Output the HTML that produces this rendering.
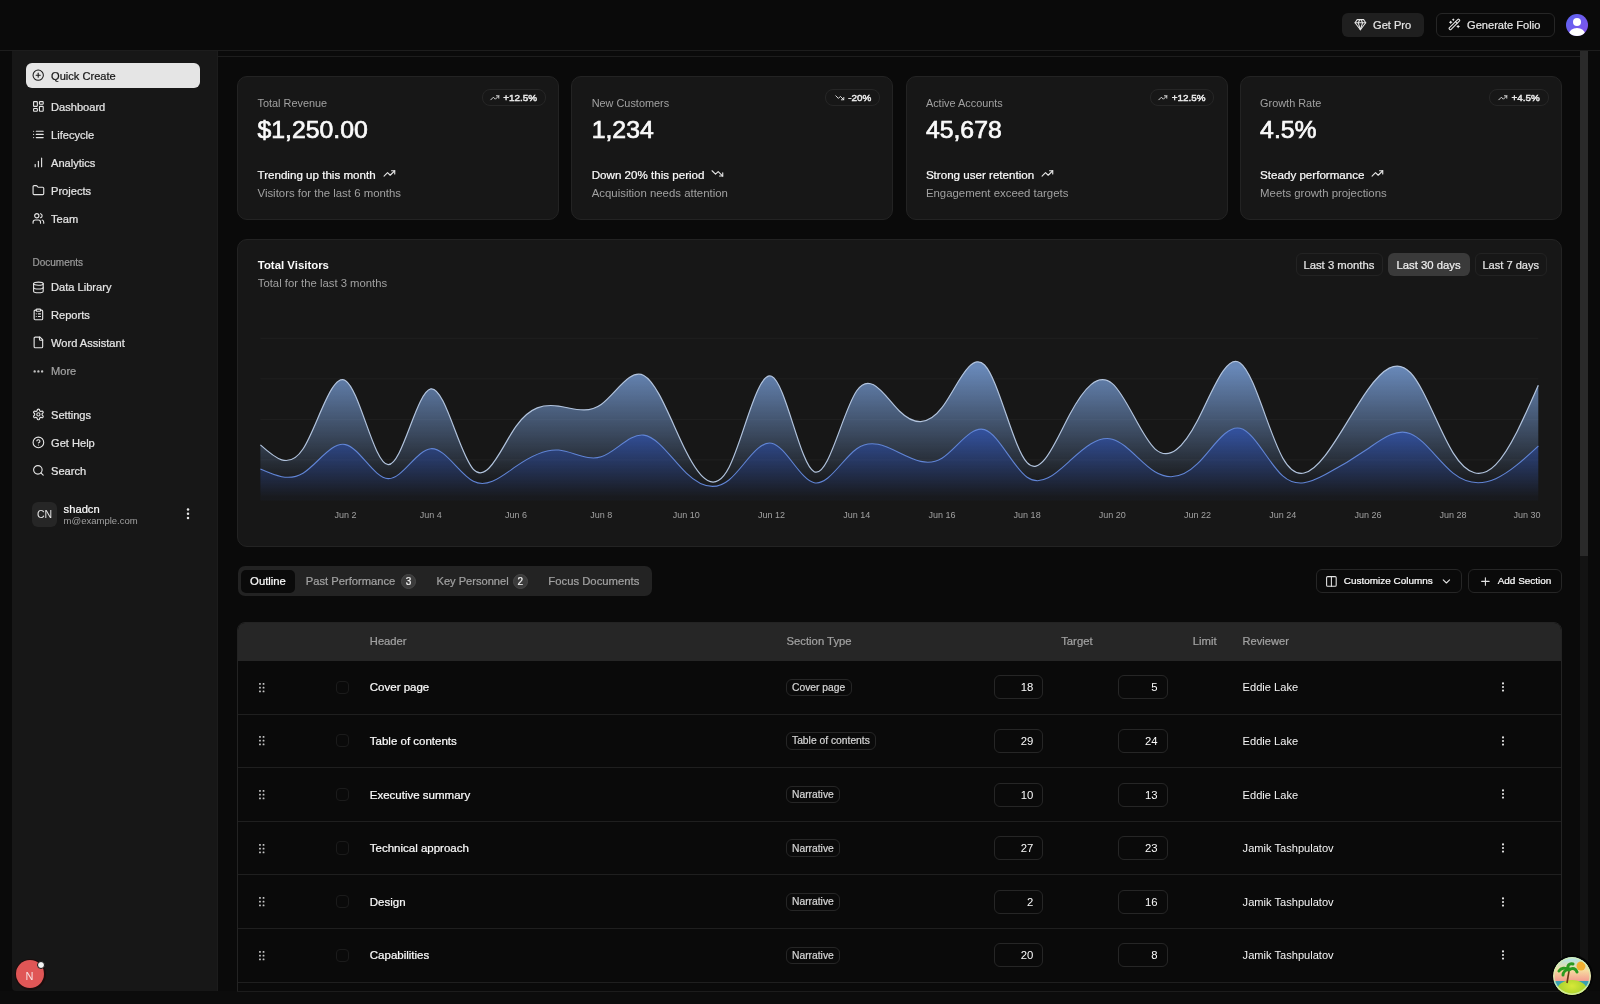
<!DOCTYPE html>
<html><head><meta charset="utf-8"><style>
html,body{margin:0;padding:0;width:1600px;height:1004px;overflow:hidden;background:#0a0a0a}
body{position:relative;font-family:"Liberation Sans",sans-serif;}
.t{position:absolute;white-space:nowrap;line-height:1;}
.m{-webkit-text-stroke:0.22px currentColor}
.r{position:absolute;box-sizing:border-box;}
svg.r{overflow:visible}
</style></head><body>
<div id="root" style="position:absolute;left:0;top:0;width:1600px;height:1004px;will-change:transform">
<div class="r" style="left:0.00px;top:0.00px;width:1600.00px;height:1004.00px;background:#0a0a0a"></div>
<div class="r" style="left:0.00px;top:50.00px;width:1600.00px;height:1.00px;background:#1d1d1d"></div>
<div class="r" style="left:12.00px;top:51.00px;width:206.00px;height:940.00px;background:#171717;border-bottom-left-radius:4px"></div>
<div class="r" style="left:217.00px;top:51.00px;width:1.00px;height:940.00px;background:#1c1c1c"></div>
<div class="r" style="left:218.00px;top:51.00px;width:1362.00px;height:940.00px;background:#0a0a0a"></div>
<div class="r" style="left:218.00px;top:56.00px;width:1362.00px;height:1.00px;background:#1d1d1d"></div>
<div class="r" style="left:1580.00px;top:51.00px;width:8.00px;height:940.00px;background:#131313"></div>
<div class="r" style="left:1580.00px;top:51.00px;width:8.00px;height:505.00px;background:#2a2a2a;border-radius:0"></div>
<div class="r" style="left:0.00px;top:991.00px;width:1600.00px;height:13.00px;background:#0c0c0c"></div>
<div class="r" style="left:1342.00px;top:12.50px;width:82.00px;height:24.50px;background:#1f1f1f;border-radius:6px"></div>
<svg class="r" style="left:1353.50px;top:18.20px;" width="12.8" height="12.8" viewBox="0 0 24 24" fill="none"><g stroke="#e5e5e5" stroke-width="2" stroke-linecap="round" stroke-linejoin="round"><path d="M6 3h12l4 6-10 13L2 9Z"/><path d="M11 3 8 9l4 13 4-13-3-6"/><path d="M2 9h20"/></g></svg>
<div class="t m" style="left:1373.00px;top:20.00px;font-size:11.1px;color:#e5e5e5;font-weight:400;">Get Pro</div>
<div class="r" style="left:1435.50px;top:12.50px;width:119.50px;height:24.50px;border:1px solid #262626;border-radius:6px;background:#0a0a0a"></div>
<svg class="r" style="left:1448.30px;top:18.20px;" width="12.8" height="12.8" viewBox="0 0 24 24" fill="none"><g stroke="#e5e5e5" stroke-width="2" stroke-linecap="round" stroke-linejoin="round"><path d="m21.64 3.64-1.28-1.28a1.21 1.21 0 0 0-1.72 0L2.36 18.64a1.21 1.21 0 0 0 0 1.72l1.28 1.28a1.2 1.2 0 0 0 1.72 0L21.64 5.36a1.2 1.2 0 0 0 0-1.72"/><path d="m14 7 3 3"/><path d="M5 6v4"/><path d="M19 14v4"/><path d="M10 2v2"/><path d="M7 8H3"/><path d="M21 16h-4"/><path d="M11 3H9"/></g></svg>
<div class="t m" style="left:1467.00px;top:20.00px;font-size:11.1px;color:#e5e5e5;font-weight:400;">Generate Folio</div>
<div class="r" style="left:1565.7px;top:14px;width:22px;height:22px;border-radius:50%;background:linear-gradient(135deg,#5a66f2,#8550ea);overflow:hidden"><div style="position:absolute;left:7px;top:4px;width:8px;height:8px;border-radius:50%;background:#fff"></div><div style="position:absolute;left:3px;top:14px;width:16px;height:12px;border-radius:50%;background:#fff"></div></div>
<div class="r" style="left:26.00px;top:63.00px;width:174.00px;height:25.00px;background:#e5e5e5;border-radius:6px"></div>
<svg class="r" style="left:31.90px;top:69.30px;" width="12.4" height="12.4" viewBox="0 0 24 24" fill="none"><g stroke="#171717" stroke-width="2" stroke-linecap="round" stroke-linejoin="round"><circle cx="12" cy="12" r="10"/><path d="M8 12h8"/><path d="M12 8v8"/></g></svg>
<div class="t m" style="left:51.00px;top:71.00px;font-size:11.1px;color:#171717;font-weight:400;">Quick Create</div>
<svg class="r" style="left:32.00px;top:100.10px;" width="12.8" height="12.8" viewBox="0 0 24 24" fill="none"><g stroke="#e5e5e5" stroke-width="2.1" stroke-linecap="round" stroke-linejoin="round"><rect width="7" height="9" x="3" y="3" rx="1"/><rect width="7" height="5" x="14" y="3" rx="1"/><rect width="7" height="9" x="14" y="12" rx="1"/><rect width="7" height="5" x="3" y="16" rx="1"/></g></svg>
<div class="t m" style="left:51.00px;top:102.00px;font-size:11.1px;color:#e5e5e5;font-weight:400;">Dashboard</div>
<svg class="r" style="left:32.00px;top:128.30px;" width="12.8" height="12.8" viewBox="0 0 24 24" fill="none"><g stroke="#e5e5e5" stroke-width="2.1" stroke-linecap="round" stroke-linejoin="round"><path d="M8 6h13"/><path d="M8 12h13"/><path d="M8 18h13"/><path d="M3 6h.01"/><path d="M3 12h.01"/><path d="M3 18h.01"/></g></svg>
<div class="t m" style="left:51.00px;top:130.00px;font-size:11.1px;color:#e5e5e5;font-weight:400;">Lifecycle</div>
<svg class="r" style="left:32.00px;top:156.40px;" width="12.8" height="12.8" viewBox="0 0 24 24" fill="none"><g stroke="#e5e5e5" stroke-width="2.1" stroke-linecap="round" stroke-linejoin="round"><path d="M12 20V10"/><path d="M18 20V4"/><path d="M6 20v-4"/></g></svg>
<div class="t m" style="left:51.00px;top:158.00px;font-size:11.1px;color:#e5e5e5;font-weight:400;">Analytics</div>
<svg class="r" style="left:32.00px;top:184.30px;" width="12.8" height="12.8" viewBox="0 0 24 24" fill="none"><g stroke="#e5e5e5" stroke-width="2.1" stroke-linecap="round" stroke-linejoin="round"><path d="M20 20a2 2 0 0 0 2-2V8a2 2 0 0 0-2-2h-7.9a2 2 0 0 1-1.69-.9L9.6 3.9A2 2 0 0 0 7.930 3H4a2 2 0 0 0-2 2v13a2 2 0 0 0 2 2Z"/></g></svg>
<div class="t m" style="left:51.00px;top:186.00px;font-size:11.1px;color:#e5e5e5;font-weight:400;">Projects</div>
<svg class="r" style="left:32.00px;top:212.20px;" width="12.8" height="12.8" viewBox="0 0 24 24" fill="none"><g stroke="#e5e5e5" stroke-width="2.1" stroke-linecap="round" stroke-linejoin="round"><path d="M16 21v-2a4 4 0 0 0-4-4H6a4 4 0 0 0-4 4v2"/><circle cx="9" cy="7" r="4"/><path d="M22 21v-2a4 4 0 0 0-3-3.87"/><path d="M16 3.13a4 4 0 0 1 0 7.75"/></g></svg>
<div class="t m" style="left:51.00px;top:214.00px;font-size:11.1px;color:#e5e5e5;font-weight:400;">Team</div>
<svg class="r" style="left:32.00px;top:280.50px;" width="12.8" height="12.8" viewBox="0 0 24 24" fill="none"><g stroke="#e5e5e5" stroke-width="2.1" stroke-linecap="round" stroke-linejoin="round"><ellipse cx="12" cy="5" rx="9" ry="3"/><path d="M3 5V19A9 3 0 0 0 21 19V5"/><path d="M3 12A9 3 0 0 0 21 12"/></g></svg>
<div class="t m" style="left:51.00px;top:282.00px;font-size:11.1px;color:#e5e5e5;font-weight:400;">Data Library</div>
<svg class="r" style="left:32.00px;top:308.40px;" width="12.8" height="12.8" viewBox="0 0 24 24" fill="none"><g stroke="#e5e5e5" stroke-width="2.1" stroke-linecap="round" stroke-linejoin="round"><rect width="8" height="4" x="8" y="2" rx="1" ry="1"/><path d="M16 4h2a2 2 0 0 1 2 2v14a2 2 0 0 1-2 2H6a2 2 0 0 1-2-2V6a2 2 0 0 1 2-2h2"/><path d="M12 11h4"/><path d="M12 16h4"/><path d="M8 11h.01"/><path d="M8 16h.01"/></g></svg>
<div class="t m" style="left:51.00px;top:310.00px;font-size:11.1px;color:#e5e5e5;font-weight:400;">Reports</div>
<svg class="r" style="left:32.00px;top:336.40px;" width="12.8" height="12.8" viewBox="0 0 24 24" fill="none"><g stroke="#e5e5e5" stroke-width="2.1" stroke-linecap="round" stroke-linejoin="round"><path d="M15 2H6a2 2 0 0 0-2 2v16a2 2 0 0 0 2 2h12a2 2 0 0 0 2-2V7Z"/><path d="M14 2v4a2 2 0 0 0 2 2h4"/></g></svg>
<div class="t m" style="left:51.00px;top:338.00px;font-size:11.1px;color:#e5e5e5;font-weight:400;">Word Assistant</div>
<svg class="r" style="left:32.00px;top:408.20px;" width="12.8" height="12.8" viewBox="0 0 24 24" fill="none"><g stroke="#e5e5e5" stroke-width="2.1" stroke-linecap="round" stroke-linejoin="round"><path d="M12.22 2h-.44a2 2 0 0 0-2 2v.18a2 2 0 0 1-1 1.73l-.43.25a2 2 0 0 1-2 0l-.15-.08a2 2 0 0 0-2.730.73l-.22.38a2 2 0 0 0 .73 2.730l.15.1a2 2 0 0 1 1 1.72v.51a2 2 0 0 1-1 1.74l-.15.09a2 2 0 0 0-.73 2.730l.22.38a2 2 0 0 0 2.730.73l.15-.08a2 2 0 0 1 2 0l.43.25a2 2 0 0 1 1 1.73V20a2 2 0 0 0 2 2h.44a2 2 0 0 0 2-2v-.18a2 2 0 0 1 1-1.73l.43-.25a2 2 0 0 1 2 0l.15.08a2 2 0 0 0 2.730-.73l.22-.39a2 2 0 0 0-.73-2.730l-.15-.08a2 2 0 0 1-1-1.74v-.5a2 2 0 0 1 1-1.74l.15-.09a2 2 0 0 0 .73-2.730l-.22-.38a2 2 0 0 0-2.730-.73l-.15.08a2 2 0 0 1-2 0l-.43-.25a2 2 0 0 1-1-1.73V4a2 2 0 0 0-2-2z"/><circle cx="12" cy="12" r="3"/></g></svg>
<div class="t m" style="left:51.00px;top:410.00px;font-size:11.1px;color:#e5e5e5;font-weight:400;">Settings</div>
<svg class="r" style="left:32.00px;top:436.10px;" width="12.8" height="12.8" viewBox="0 0 24 24" fill="none"><g stroke="#e5e5e5" stroke-width="2.1" stroke-linecap="round" stroke-linejoin="round"><circle cx="12" cy="12" r="10"/><path d="M9.09 9a3 3 0 0 1 5.830 1c0 2-3 3-3 3"/><path d="M12 17h.01"/></g></svg>
<div class="t m" style="left:51.00px;top:438.00px;font-size:11.1px;color:#e5e5e5;font-weight:400;">Get Help</div>
<svg class="r" style="left:32.00px;top:464.00px;" width="12.8" height="12.8" viewBox="0 0 24 24" fill="none"><g stroke="#e5e5e5" stroke-width="2.1" stroke-linecap="round" stroke-linejoin="round"><circle cx="11" cy="11" r="8"/><path d="m21 21-4.3-4.3"/></g></svg>
<div class="t m" style="left:51.00px;top:466.00px;font-size:11.1px;color:#e5e5e5;font-weight:400;">Search</div>
<div class="t m" style="left:32.50px;top:258.00px;font-size:10px;color:#9a9a9a;font-weight:400;">Documents</div>
<svg class="r" style="left:32.00px;top:364.50px;" width="12.8" height="12.8" viewBox="0 0 24 24" fill="none"><g stroke="#c8c8c8" stroke-width="2.4" stroke-linecap="round" stroke-linejoin="round"><circle cx="12" cy="12" r="1"/><circle cx="19" cy="12" r="1"/><circle cx="5" cy="12" r="1"/></g></svg>
<div class="t m" style="left:51.00px;top:366.00px;font-size:11.1px;color:#a3a3a3;font-weight:400;">More</div>
<div class="r" style="left:32.40px;top:502.00px;width:24.20px;height:24.60px;background:#262626;border-radius:6px"></div>
<div class="t " style="left:-55.50px;width:200px;text-align:center;top:509.00px;font-size:10.5px;color:#e5e5e5;font-weight:400;">CN</div>
<div class="t m" style="left:63.60px;top:504.00px;font-size:11.2px;color:#fafafa;font-weight:400;">shadcn</div>
<div class="t " style="left:63.60px;top:516.00px;font-size:9.5px;color:#a1a1a1;font-weight:400;">m@example.com</div>
<svg class="r" style="left:185.70px;top:508.30px;" width="4" height="12" viewBox="0 0 4 12" fill="none"><g fill="#e5e5e5"><circle cx="2" cy="1.6" r="1.25"/><circle cx="2" cy="5.8" r="1.25"/><circle cx="2" cy="10" r="1.25"/></g></svg>
<div class="r" style="left:14.5px;top:958.5px;width:31px;height:31px;border-radius:50%;background:#1a0d0d"></div>
<div class="r" style="left:16px;top:960px;width:28px;height:28px;border-radius:50%;background:#e05656"></div>
<div class="t " style="left:25.50px;top:971.00px;font-size:11px;color:#f7e1e1;font-weight:400;">N</div>
<div class="r" style="left:36.5px;top:961px;width:8px;height:8px;border-radius:50%;background:#f4f4f4;border:1px solid #111"></div>
<div class="r" style="left:237.20px;top:76.00px;width:322.10px;height:144.00px;background:#171717;border:1px solid #232323;border-radius:10px"></div>
<div class="t " style="left:257.50px;top:98.00px;font-size:10.9px;color:#a1a1a1;font-weight:400;">Total Revenue</div>
<div class="t " style="left:257.50px;top:118.00px;font-size:24.8px;color:#fafafa;font-weight:400;-webkit-text-stroke:0.7px #fafafa">$1,250.00</div>
<div class="r" style="left:481.60px;top:89.10px;width:64.30px;height:16.70px;border:1px solid #262626;border-radius:8px"></div>
<svg class="r" style="left:489.85px;top:92.60px;" width="9.6" height="9.6" viewBox="0 0 24 24" fill="none"><g stroke="#e5e5e5" stroke-width="2.3" stroke-linecap="round" stroke-linejoin="round"><path d="M22 7 13.5 15.5 8.5 10.5 2 17"/><path d="M16 7h6v6"/></g></svg>
<div class="t " style="right:1062.90px;top:93.00px;font-size:9.9px;color:#ececec;font-weight:400;-webkit-text-stroke:0.45px #ececec">+12.5%</div>
<div class="t m" style="left:257.50px;top:169.00px;font-size:11.6px;color:#fafafa;font-weight:400;">Trending up this month</div>
<svg class="r" style="left:382.51px;top:166.80px;" width="12.8" height="12.8" viewBox="0 0 24 24" fill="none"><g stroke="#e5e5e5" stroke-width="2.1" stroke-linecap="round" stroke-linejoin="round"><path d="M22 7 13.5 15.5 8.5 10.5 2 17"/><path d="M16 7h6v6"/></g></svg>
<div class="t " style="left:257.50px;top:188.00px;font-size:11.4px;color:#a1a1a1;font-weight:400;">Visitors for the last 6 months</div>
<div class="r" style="left:571.40px;top:76.00px;width:322.10px;height:144.00px;background:#171717;border:1px solid #232323;border-radius:10px"></div>
<div class="t " style="left:591.70px;top:98.00px;font-size:10.9px;color:#a1a1a1;font-weight:400;">New Customers</div>
<div class="t " style="left:591.70px;top:118.00px;font-size:24.8px;color:#fafafa;font-weight:400;-webkit-text-stroke:0.7px #fafafa">1,234</div>
<div class="r" style="left:825.10px;top:89.10px;width:55.00px;height:16.70px;border:1px solid #262626;border-radius:8px"></div>
<svg class="r" style="left:834.79px;top:92.60px;" width="9.6" height="9.6" viewBox="0 0 24 24" fill="none"><g stroke="#e5e5e5" stroke-width="2.3" stroke-linecap="round" stroke-linejoin="round"><path d="M22 17 13.5 8.5 8.5 13.5 2 7"/><path d="M16 17h6v-6"/></g></svg>
<div class="t " style="right:728.70px;top:93.00px;font-size:9.9px;color:#ececec;font-weight:400;-webkit-text-stroke:0.45px #ececec">-20%</div>
<div class="t m" style="left:591.70px;top:169.00px;font-size:11.6px;color:#fafafa;font-weight:400;">Down 20% this period</div>
<svg class="r" style="left:711.33px;top:166.80px;" width="12.8" height="12.8" viewBox="0 0 24 24" fill="none"><g stroke="#e5e5e5" stroke-width="2.1" stroke-linecap="round" stroke-linejoin="round"><path d="M22 17 13.5 8.5 8.5 13.5 2 7"/><path d="M16 17h6v-6"/></g></svg>
<div class="t " style="left:591.70px;top:188.00px;font-size:11.4px;color:#a1a1a1;font-weight:400;">Acquisition needs attention</div>
<div class="r" style="left:905.60px;top:76.00px;width:322.10px;height:144.00px;background:#171717;border:1px solid #232323;border-radius:10px"></div>
<div class="t " style="left:925.90px;top:98.00px;font-size:10.9px;color:#a1a1a1;font-weight:400;">Active Accounts</div>
<div class="t " style="left:925.90px;top:118.00px;font-size:24.8px;color:#fafafa;font-weight:400;-webkit-text-stroke:0.7px #fafafa">45,678</div>
<div class="r" style="left:1150.00px;top:89.10px;width:64.30px;height:16.70px;border:1px solid #262626;border-radius:8px"></div>
<svg class="r" style="left:1158.25px;top:92.60px;" width="9.6" height="9.6" viewBox="0 0 24 24" fill="none"><g stroke="#e5e5e5" stroke-width="2.3" stroke-linecap="round" stroke-linejoin="round"><path d="M22 7 13.5 15.5 8.5 10.5 2 17"/><path d="M16 7h6v6"/></g></svg>
<div class="t " style="right:394.50px;top:93.00px;font-size:9.9px;color:#ececec;font-weight:400;-webkit-text-stroke:0.45px #ececec">+12.5%</div>
<div class="t m" style="left:925.90px;top:169.00px;font-size:11.6px;color:#fafafa;font-weight:400;">Strong user retention</div>
<svg class="r" style="left:1041.02px;top:166.80px;" width="12.8" height="12.8" viewBox="0 0 24 24" fill="none"><g stroke="#e5e5e5" stroke-width="2.1" stroke-linecap="round" stroke-linejoin="round"><path d="M22 7 13.5 15.5 8.5 10.5 2 17"/><path d="M16 7h6v6"/></g></svg>
<div class="t " style="left:925.90px;top:188.00px;font-size:11.4px;color:#a1a1a1;font-weight:400;">Engagement exceed targets</div>
<div class="r" style="left:1239.80px;top:76.00px;width:322.10px;height:144.00px;background:#171717;border:1px solid #232323;border-radius:10px"></div>
<div class="t " style="left:1260.10px;top:98.00px;font-size:10.9px;color:#a1a1a1;font-weight:400;">Growth Rate</div>
<div class="t " style="left:1260.10px;top:118.00px;font-size:24.8px;color:#fafafa;font-weight:400;-webkit-text-stroke:0.7px #fafafa">4.5%</div>
<div class="r" style="left:1488.50px;top:89.10px;width:60.00px;height:16.70px;border:1px solid #262626;border-radius:8px"></div>
<svg class="r" style="left:1497.95px;top:92.60px;" width="9.6" height="9.6" viewBox="0 0 24 24" fill="none"><g stroke="#e5e5e5" stroke-width="2.3" stroke-linecap="round" stroke-linejoin="round"><path d="M22 7 13.5 15.5 8.5 10.5 2 17"/><path d="M16 7h6v6"/></g></svg>
<div class="t " style="right:60.30px;top:93.00px;font-size:9.9px;color:#ececec;font-weight:400;-webkit-text-stroke:0.45px #ececec">+4.5%</div>
<div class="t m" style="left:1260.10px;top:169.00px;font-size:11.6px;color:#fafafa;font-weight:400;">Steady performance</div>
<svg class="r" style="left:1371.35px;top:166.80px;" width="12.8" height="12.8" viewBox="0 0 24 24" fill="none"><g stroke="#e5e5e5" stroke-width="2.1" stroke-linecap="round" stroke-linejoin="round"><path d="M22 7 13.5 15.5 8.5 10.5 2 17"/><path d="M16 7h6v6"/></g></svg>
<div class="t " style="left:1260.10px;top:188.00px;font-size:11.4px;color:#a1a1a1;font-weight:400;">Meets growth projections</div>
<div class="r" style="left:237.20px;top:238.90px;width:1324.70px;height:307.90px;background:#171717;border:1px solid #232323;border-radius:10px"></div>
<div class="t " style="left:257.80px;top:260.00px;font-size:11.4px;color:#fafafa;font-weight:700;">Total Visitors</div>
<div class="t " style="left:257.80px;top:278.00px;font-size:11.3px;color:#a1a1a1;font-weight:400;">Total for the last 3 months</div>
<div class="r" style="left:1295.90px;top:252.90px;width:87.10px;height:23.60px;border:1px solid #232323;border-radius:6px"></div>
<div class="t m" style="left:1303.40px;top:260.00px;font-size:11.3px;color:#e5e5e5;font-weight:400;">Last 3 months</div>
<div class="r" style="left:1388.30px;top:252.90px;width:81.30px;height:23.60px;background:#3a3a3a;border-radius:6px"></div>
<div class="t m" style="left:1396.50px;top:260.00px;font-size:11.3px;color:#f0f0f0;font-weight:400;">Last 30 days</div>
<div class="r" style="left:1475.40px;top:252.90px;width:72.10px;height:23.60px;border:1px solid #232323;border-radius:6px"></div>
<div class="t m" style="left:1482.40px;top:260.00px;font-size:11.1px;color:#e5e5e5;font-weight:400;">Last 7 days</div>
<svg class="r" style="left:0;top:0" width="1600" height="1004" viewBox="0 0 1600 1004">
<defs>
<linearGradient id="fd" x1="0" y1="0" x2="0" y2="1"><stop offset="5%" stop-color="#6888b8" stop-opacity="1"/><stop offset="95%" stop-color="#6888b8" stop-opacity="0.05"/></linearGradient>
<linearGradient id="fm" x1="0" y1="0" x2="0" y2="1"><stop offset="5%" stop-color="#3a5fbc" stop-opacity="0.8"/><stop offset="95%" stop-color="#3a5fbc" stop-opacity="0.05"/></linearGradient>
</defs>
<line x1="260.4" x2="1538.3" y1="338.3" y2="338.3" stroke="#202020" stroke-width="1"/><line x1="260.4" x2="1538.3" y1="378.8" y2="378.8" stroke="#202020" stroke-width="1"/><line x1="260.4" x2="1538.3" y1="419.4" y2="419.4" stroke="#202020" stroke-width="1"/><line x1="260.4" x2="1538.3" y1="459.9" y2="459.9" stroke="#202020" stroke-width="1"/>
<path d="M260.40,469.10C274.60,475.42,288.80,481.73,303.00,473.18C317.20,464.64,331.39,441.23,345.59,444.61C359.79,447.98,373.99,478.14,388.19,478.63C402.39,479.12,416.59,449.93,430.79,448.69C444.99,447.44,459.18,474.13,473.38,481.35C487.58,488.57,501.78,476.32,515.98,466.38C530.18,456.44,544.38,448.82,558.58,450.05C572.78,451.28,586.97,461.35,601.17,456.85C615.37,452.36,629.57,433.29,643.77,435.08C657.97,436.87,672.17,459.50,686.37,473.18C700.57,486.86,714.76,491.59,728.96,479.99C743.16,468.39,757.36,440.46,771.56,443.25C785.76,446.03,799.96,479.53,814.16,482.71C828.36,485.88,842.55,458.73,856.75,448.69C870.95,438.65,885.15,445.71,899.35,452.77C913.55,459.83,927.75,466.87,941.95,458.21C956.15,449.56,970.34,425.20,984.54,429.64C998.74,434.07,1012.94,467.31,1027.14,477.27C1041.34,487.22,1055.54,473.90,1069.74,460.94C1083.94,447.97,1098.13,435.36,1112.33,439.16C1126.53,442.96,1140.73,463.18,1154.93,471.82C1169.13,480.47,1183.33,477.55,1197.53,463.66C1211.73,449.76,1225.92,424.89,1240.12,428.28C1254.32,431.66,1268.52,463.31,1282.72,475.90C1296.92,488.50,1311.12,482.06,1325.32,474.54C1339.52,467.03,1353.71,458.44,1367.91,448.69C1382.11,438.93,1396.31,428.00,1410.51,433.72C1424.71,439.43,1438.91,461.79,1453.11,473.18C1467.31,484.57,1481.50,484.99,1495.70,478.63C1509.90,472.26,1524.10,459.11,1538.30,445.97L1538.30,500.40L260.40,500.40Z" fill="url(#fm)"/>
<path d="M260.40,444.88C274.60,457.70,288.80,470.52,303.00,448.96C317.20,427.40,331.39,371.46,345.59,380.65C359.79,389.84,373.99,464.16,388.19,464.61C402.39,465.06,416.59,391.63,430.79,388.95C444.99,386.26,459.18,454.32,473.38,469.37C487.58,484.42,501.78,446.47,515.98,426.37C530.18,406.28,544.38,404.04,558.58,406.09C572.78,408.15,586.97,414.48,601.17,404.46C615.37,394.44,629.57,368.07,643.77,375.48C657.97,382.88,672.17,424.07,686.37,452.09C700.57,480.11,714.76,494.95,728.96,467.47C743.16,439.98,757.36,370.16,771.56,376.29C785.76,382.42,799.96,464.49,814.16,471.69C828.36,478.88,842.55,411.20,856.75,390.72C870.95,370.24,885.15,396.96,899.35,410.99C913.55,425.03,927.75,426.37,941.95,407.73C956.15,389.08,970.34,350.44,984.54,365.00C998.74,379.55,1012.94,447.31,1027.14,462.70C1041.34,478.10,1055.54,441.14,1069.74,414.53C1083.94,387.92,1098.13,371.67,1112.33,383.64C1126.53,395.61,1140.73,435.80,1154.93,448.82C1169.13,461.85,1183.33,447.70,1197.53,420.52C1211.73,393.34,1225.92,353.12,1240.12,362.96C1254.32,372.79,1268.52,432.69,1282.72,457.94C1296.92,483.19,1311.12,473.80,1325.32,455.36C1339.52,436.92,1353.71,409.44,1367.91,389.63C1382.11,369.82,1396.31,357.69,1410.51,372.75C1424.71,387.82,1438.91,430.08,1453.11,452.91C1467.31,475.73,1481.50,479.12,1495.70,464.61C1509.90,450.10,1524.10,417.69,1538.30,385.27L1538.30,445.97C1524.10,459.11,1509.90,472.26,1495.70,478.63C1481.50,484.99,1467.31,484.57,1453.11,473.18C1438.91,461.79,1424.71,439.43,1410.51,433.72C1396.31,428.00,1382.11,438.93,1367.91,448.69C1353.71,458.44,1339.52,467.03,1325.32,474.54C1311.12,482.06,1296.92,488.50,1282.72,475.90C1268.52,463.31,1254.32,431.66,1240.12,428.28C1225.92,424.89,1211.73,449.76,1197.53,463.66C1183.33,477.55,1169.13,480.47,1154.93,471.82C1140.73,463.18,1126.53,442.96,1112.33,439.16C1098.13,435.36,1083.94,447.97,1069.74,460.94C1055.54,473.90,1041.34,487.22,1027.14,477.27C1012.94,467.31,998.74,434.07,984.54,429.64C970.34,425.20,956.15,449.56,941.95,458.21C927.75,466.87,913.55,459.83,899.35,452.77C885.15,445.71,870.95,438.65,856.75,448.69C842.55,458.73,828.36,485.88,814.16,482.71C799.96,479.53,785.76,446.03,771.56,443.25C757.36,440.46,743.16,468.39,728.96,479.99C714.76,491.59,700.57,486.86,686.37,473.18C672.17,459.50,657.97,436.87,643.77,435.08C629.57,433.29,615.37,452.36,601.17,456.85C586.97,461.35,572.78,451.28,558.58,450.05C544.38,448.82,530.18,456.44,515.98,466.38C501.78,476.32,487.58,488.57,473.38,481.35C459.18,474.13,444.99,447.44,430.79,448.69C416.59,449.93,402.39,479.12,388.19,478.63C373.99,478.14,359.79,447.98,345.59,444.61C331.39,441.23,317.20,464.64,303.00,473.18C288.80,481.73,274.60,475.42,260.40,469.10Z" fill="url(#fd)"/>
<path d="M260.40,469.10C274.60,475.42,288.80,481.73,303.00,473.18C317.20,464.64,331.39,441.23,345.59,444.61C359.79,447.98,373.99,478.14,388.19,478.63C402.39,479.12,416.59,449.93,430.79,448.69C444.99,447.44,459.18,474.13,473.38,481.35C487.58,488.57,501.78,476.32,515.98,466.38C530.18,456.44,544.38,448.82,558.58,450.05C572.78,451.28,586.97,461.35,601.17,456.85C615.37,452.36,629.57,433.29,643.77,435.08C657.97,436.87,672.17,459.50,686.37,473.18C700.57,486.86,714.76,491.59,728.96,479.99C743.16,468.39,757.36,440.46,771.56,443.25C785.76,446.03,799.96,479.53,814.16,482.71C828.36,485.88,842.55,458.73,856.75,448.69C870.95,438.65,885.15,445.71,899.35,452.77C913.55,459.83,927.75,466.87,941.95,458.21C956.15,449.56,970.34,425.20,984.54,429.64C998.74,434.07,1012.94,467.31,1027.14,477.27C1041.34,487.22,1055.54,473.90,1069.74,460.94C1083.94,447.97,1098.13,435.36,1112.33,439.16C1126.53,442.96,1140.73,463.18,1154.93,471.82C1169.13,480.47,1183.33,477.55,1197.53,463.66C1211.73,449.76,1225.92,424.89,1240.12,428.28C1254.32,431.66,1268.52,463.31,1282.72,475.90C1296.92,488.50,1311.12,482.06,1325.32,474.54C1339.52,467.03,1353.71,458.44,1367.91,448.69C1382.11,438.93,1396.31,428.00,1410.51,433.72C1424.71,439.43,1438.91,461.79,1453.11,473.18C1467.31,484.57,1481.50,484.99,1495.70,478.63C1509.90,472.26,1524.10,459.11,1538.30,445.97" fill="none" stroke="#6185d6" stroke-width="1.1"/>
<path d="M260.40,444.88C274.60,457.70,288.80,470.52,303.00,448.96C317.20,427.40,331.39,371.46,345.59,380.65C359.79,389.84,373.99,464.16,388.19,464.61C402.39,465.06,416.59,391.63,430.79,388.95C444.99,386.26,459.18,454.32,473.38,469.37C487.58,484.42,501.78,446.47,515.98,426.37C530.18,406.28,544.38,404.04,558.58,406.09C572.78,408.15,586.97,414.48,601.17,404.46C615.37,394.44,629.57,368.07,643.77,375.48C657.97,382.88,672.17,424.07,686.37,452.09C700.57,480.11,714.76,494.95,728.96,467.47C743.16,439.98,757.36,370.16,771.56,376.29C785.76,382.42,799.96,464.49,814.16,471.69C828.36,478.88,842.55,411.20,856.75,390.72C870.95,370.24,885.15,396.96,899.35,410.99C913.55,425.03,927.75,426.37,941.95,407.73C956.15,389.08,970.34,350.44,984.54,365.00C998.74,379.55,1012.94,447.31,1027.14,462.70C1041.34,478.10,1055.54,441.14,1069.74,414.53C1083.94,387.92,1098.13,371.67,1112.33,383.64C1126.53,395.61,1140.73,435.80,1154.93,448.82C1169.13,461.85,1183.33,447.70,1197.53,420.52C1211.73,393.34,1225.92,353.12,1240.12,362.96C1254.32,372.79,1268.52,432.69,1282.72,457.94C1296.92,483.19,1311.12,473.80,1325.32,455.36C1339.52,436.92,1353.71,409.44,1367.91,389.63C1382.11,369.82,1396.31,357.69,1410.51,372.75C1424.71,387.82,1438.91,430.08,1453.11,452.91C1467.31,475.73,1481.50,479.12,1495.70,464.61C1509.90,450.10,1524.10,417.69,1538.30,385.27" fill="none" stroke="#b2c4de" stroke-width="1.2"/>
</svg>
<div class="t " style="left:245.59px;width:200px;text-align:center;top:511.00px;font-size:9px;color:#a1a1a1;font-weight:400;">Jun 2</div>
<div class="t " style="left:330.79px;width:200px;text-align:center;top:511.00px;font-size:9px;color:#a1a1a1;font-weight:400;">Jun 4</div>
<div class="t " style="left:415.98px;width:200px;text-align:center;top:511.00px;font-size:9px;color:#a1a1a1;font-weight:400;">Jun 6</div>
<div class="t " style="left:501.17px;width:200px;text-align:center;top:511.00px;font-size:9px;color:#a1a1a1;font-weight:400;">Jun 8</div>
<div class="t " style="left:586.37px;width:200px;text-align:center;top:511.00px;font-size:9px;color:#a1a1a1;font-weight:400;">Jun 10</div>
<div class="t " style="left:671.56px;width:200px;text-align:center;top:511.00px;font-size:9px;color:#a1a1a1;font-weight:400;">Jun 12</div>
<div class="t " style="left:756.75px;width:200px;text-align:center;top:511.00px;font-size:9px;color:#a1a1a1;font-weight:400;">Jun 14</div>
<div class="t " style="left:841.95px;width:200px;text-align:center;top:511.00px;font-size:9px;color:#a1a1a1;font-weight:400;">Jun 16</div>
<div class="t " style="left:927.14px;width:200px;text-align:center;top:511.00px;font-size:9px;color:#a1a1a1;font-weight:400;">Jun 18</div>
<div class="t " style="left:1012.33px;width:200px;text-align:center;top:511.00px;font-size:9px;color:#a1a1a1;font-weight:400;">Jun 20</div>
<div class="t " style="left:1097.53px;width:200px;text-align:center;top:511.00px;font-size:9px;color:#a1a1a1;font-weight:400;">Jun 22</div>
<div class="t " style="left:1182.72px;width:200px;text-align:center;top:511.00px;font-size:9px;color:#a1a1a1;font-weight:400;">Jun 24</div>
<div class="t " style="left:1267.91px;width:200px;text-align:center;top:511.00px;font-size:9px;color:#a1a1a1;font-weight:400;">Jun 26</div>
<div class="t " style="left:1353.11px;width:200px;text-align:center;top:511.00px;font-size:9px;color:#a1a1a1;font-weight:400;">Jun 28</div>
<div class="t " style="left:1427.00px;width:200px;text-align:center;top:511.00px;font-size:9px;color:#a1a1a1;font-weight:400;">Jun 30</div>
<div class="r" style="left:237.70px;top:566.20px;width:414.50px;height:30.30px;background:#232323;border-radius:7px"></div>
<div class="r" style="left:241.20px;top:569.60px;width:54.30px;height:23.40px;background:#0a0a0a;border-radius:5px"></div>
<div class="t m" style="left:250.10px;top:576.00px;font-size:11.3px;color:#fafafa;font-weight:400;">Outline</div>
<div class="t m" style="left:305.80px;top:576.00px;font-size:11.2px;color:#a1a1a1;font-weight:400;">Past Performance</div>
<div class="r" style="left:401.00px;top:574.00px;width:15.00px;height:15.00px;background:#3b3b3b;border:1px solid #474747;border-radius:50%"></div>
<div class="t m" style="left:308.60px;width:200px;text-align:center;top:577.00px;font-size:10px;color:#f0f0f0;font-weight:400;">3</div>
<div class="t m" style="left:436.50px;top:576.00px;font-size:11.1px;color:#a1a1a1;font-weight:400;">Key Personnel</div>
<div class="r" style="left:512.90px;top:574.00px;width:15.00px;height:15.00px;background:#3b3b3b;border:1px solid #474747;border-radius:50%"></div>
<div class="t m" style="left:420.40px;width:200px;text-align:center;top:577.00px;font-size:10px;color:#f0f0f0;font-weight:400;">2</div>
<div class="t m" style="left:548.30px;top:576.00px;font-size:11.3px;color:#a1a1a1;font-weight:400;">Focus Documents</div>
<div class="r" style="left:1315.70px;top:569.30px;width:146.20px;height:24.10px;border:1px solid #262626;border-radius:6px;background:#0a0a0a"></div>
<svg class="r" style="left:1325.00px;top:575.00px;" width="12.8" height="12.8" viewBox="0 0 24 24" fill="none"><g stroke="#e5e5e5" stroke-width="2" stroke-linecap="round" stroke-linejoin="round"><rect width="18" height="18" x="3" y="3" rx="2"/><path d="M12 3v18"/></g></svg>
<div class="t m" style="left:1343.80px;top:576.00px;font-size:9.95px;color:#fafafa;font-weight:400;">Customize Columns</div>
<svg class="r" style="left:1439.60px;top:575.00px;" width="12.8" height="12.8" viewBox="0 0 24 24" fill="none"><g stroke="#e5e5e5" stroke-width="2" stroke-linecap="round" stroke-linejoin="round"><path d="m6 9 6 6 6-6"/></g></svg>
<div class="r" style="left:1468.40px;top:569.30px;width:93.50px;height:24.10px;border:1px solid #262626;border-radius:6px;background:#0a0a0a"></div>
<svg class="r" style="left:1478.50px;top:575.00px;" width="12.8" height="12.8" viewBox="0 0 24 24" fill="none"><g stroke="#e5e5e5" stroke-width="2" stroke-linecap="round" stroke-linejoin="round"><path d="M5 12h14"/><path d="M12 5v14"/></g></svg>
<div class="t m" style="left:1497.70px;top:576.00px;font-size:9.95px;color:#fafafa;font-weight:400;">Add Section</div>
<div class="r" style="left:237.2px;top:621.6px;width:1324.6px;height:400px;border:1px solid #232323;border-radius:8px;overflow:hidden;background:#0a0a0a"><div style="position:absolute;left:0;top:0;right:0;height:38.6px;background:#262626"></div></div>
<div class="t m" style="left:369.80px;top:636.00px;font-size:11.2px;color:#a1a1a1;font-weight:400;">Header</div>
<div class="t m" style="left:786.50px;top:636.00px;font-size:11.3px;color:#a1a1a1;font-weight:400;">Section Type</div>
<div class="t m" style="left:1061.20px;top:636.00px;font-size:11.3px;color:#a1a1a1;font-weight:400;">Target</div>
<div class="t m" style="left:1192.70px;top:636.00px;font-size:11.3px;color:#a1a1a1;font-weight:400;">Limit</div>
<div class="t m" style="left:1242.60px;top:636.00px;font-size:11.1px;color:#a1a1a1;font-weight:400;">Reviewer</div>
<div class="r" style="left:238.20px;top:713.50px;width:1322.60px;height:1.00px;background:#1f1f1f"></div>
<svg class="r" style="left:258.90px;top:682.80px;" width="6" height="10" viewBox="0 0 6 10" fill="none"><g fill="#c4c4c4"><rect x="0.050000000000000044" y="0.050000000000000044" width="1.8" height="1.8" rx="0.5"/><rect x="0.050000000000000044" y="3.75" width="1.8" height="1.8" rx="0.5"/><rect x="0.050000000000000044" y="7.45" width="1.8" height="1.8" rx="0.5"/><rect x="3.6499999999999995" y="0.050000000000000044" width="1.8" height="1.8" rx="0.5"/><rect x="3.6499999999999995" y="3.75" width="1.8" height="1.8" rx="0.5"/><rect x="3.6499999999999995" y="7.45" width="1.8" height="1.8" rx="0.5"/></g></svg>
<div class="r" style="left:336.10px;top:680.50px;width:13.10px;height:13.40px;border:1px solid #1b1b1b;border-radius:4px"></div>
<div class="t m" style="left:369.80px;top:682.00px;font-size:11.5px;color:#fafafa;font-weight:400;">Cover page</div>
<div class="r" style="left:786.30px;top:678.60px;width:65.25px;height:17.50px;border:1px solid #262626;border-radius:6px"></div>
<div class="t m" style="left:792.00px;top:683.00px;font-size:10.3px;color:#d4d4d4;font-weight:400;">Cover page</div>
<div class="r" style="left:994.40px;top:675.30px;width:49.10px;height:24.10px;border:1px solid #262626;border-radius:6px"></div>
<div class="t " style="right:566.60px;top:682.00px;font-size:11.3px;color:#fafafa;font-weight:400;">18</div>
<div class="r" style="left:1118.20px;top:675.30px;width:49.60px;height:24.10px;border:1px solid #262626;border-radius:6px"></div>
<div class="t " style="right:442.40px;top:682.00px;font-size:11.3px;color:#fafafa;font-weight:400;">5</div>
<div class="t " style="left:1242.60px;top:682.00px;font-size:11.1px;color:#f5f5f5;font-weight:400;">Eddie Lake</div>
<svg class="r" style="left:1501.30px;top:682.20px;" width="4" height="10" viewBox="0 0 4 10" fill="none"><g fill="#e5e5e5"><circle cx="2" cy="1.4" r="1.05"/><circle cx="2" cy="5" r="1.05"/><circle cx="2" cy="8.6" r="1.05"/></g></svg>
<div class="r" style="left:238.20px;top:767.10px;width:1322.60px;height:1.00px;background:#1f1f1f"></div>
<svg class="r" style="left:258.90px;top:736.40px;" width="6" height="10" viewBox="0 0 6 10" fill="none"><g fill="#c4c4c4"><rect x="0.050000000000000044" y="0.050000000000000044" width="1.8" height="1.8" rx="0.5"/><rect x="0.050000000000000044" y="3.75" width="1.8" height="1.8" rx="0.5"/><rect x="0.050000000000000044" y="7.45" width="1.8" height="1.8" rx="0.5"/><rect x="3.6499999999999995" y="0.050000000000000044" width="1.8" height="1.8" rx="0.5"/><rect x="3.6499999999999995" y="3.75" width="1.8" height="1.8" rx="0.5"/><rect x="3.6499999999999995" y="7.45" width="1.8" height="1.8" rx="0.5"/></g></svg>
<div class="r" style="left:336.10px;top:734.10px;width:13.10px;height:13.40px;border:1px solid #1b1b1b;border-radius:4px"></div>
<div class="t m" style="left:369.80px;top:736.00px;font-size:11.5px;color:#fafafa;font-weight:400;">Table of contents</div>
<div class="r" style="left:786.30px;top:732.20px;width:89.87px;height:17.50px;border:1px solid #262626;border-radius:6px"></div>
<div class="t m" style="left:792.00px;top:736.00px;font-size:10.3px;color:#d4d4d4;font-weight:400;">Table of contents</div>
<div class="r" style="left:994.40px;top:728.90px;width:49.10px;height:24.10px;border:1px solid #262626;border-radius:6px"></div>
<div class="t " style="right:566.60px;top:736.00px;font-size:11.3px;color:#fafafa;font-weight:400;">29</div>
<div class="r" style="left:1118.20px;top:728.90px;width:49.60px;height:24.10px;border:1px solid #262626;border-radius:6px"></div>
<div class="t " style="right:442.40px;top:736.00px;font-size:11.3px;color:#fafafa;font-weight:400;">24</div>
<div class="t " style="left:1242.60px;top:736.00px;font-size:11.1px;color:#f5f5f5;font-weight:400;">Eddie Lake</div>
<svg class="r" style="left:1501.30px;top:735.80px;" width="4" height="10" viewBox="0 0 4 10" fill="none"><g fill="#e5e5e5"><circle cx="2" cy="1.4" r="1.05"/><circle cx="2" cy="5" r="1.05"/><circle cx="2" cy="8.6" r="1.05"/></g></svg>
<div class="r" style="left:238.20px;top:820.70px;width:1322.60px;height:1.00px;background:#1f1f1f"></div>
<svg class="r" style="left:258.90px;top:790.00px;" width="6" height="10" viewBox="0 0 6 10" fill="none"><g fill="#c4c4c4"><rect x="0.050000000000000044" y="0.050000000000000044" width="1.8" height="1.8" rx="0.5"/><rect x="0.050000000000000044" y="3.75" width="1.8" height="1.8" rx="0.5"/><rect x="0.050000000000000044" y="7.45" width="1.8" height="1.8" rx="0.5"/><rect x="3.6499999999999995" y="0.050000000000000044" width="1.8" height="1.8" rx="0.5"/><rect x="3.6499999999999995" y="3.75" width="1.8" height="1.8" rx="0.5"/><rect x="3.6499999999999995" y="7.45" width="1.8" height="1.8" rx="0.5"/></g></svg>
<div class="r" style="left:336.10px;top:787.70px;width:13.10px;height:13.40px;border:1px solid #1b1b1b;border-radius:4px"></div>
<div class="t m" style="left:369.80px;top:790.00px;font-size:11.5px;color:#fafafa;font-weight:400;">Executive summary</div>
<div class="r" style="left:786.30px;top:785.80px;width:53.78px;height:17.50px;border:1px solid #262626;border-radius:6px"></div>
<div class="t m" style="left:792.00px;top:790.00px;font-size:10.3px;color:#d4d4d4;font-weight:400;">Narrative</div>
<div class="r" style="left:994.40px;top:782.50px;width:49.10px;height:24.10px;border:1px solid #262626;border-radius:6px"></div>
<div class="t " style="right:566.60px;top:790.00px;font-size:11.3px;color:#fafafa;font-weight:400;">10</div>
<div class="r" style="left:1118.20px;top:782.50px;width:49.60px;height:24.10px;border:1px solid #262626;border-radius:6px"></div>
<div class="t " style="right:442.40px;top:790.00px;font-size:11.3px;color:#fafafa;font-weight:400;">13</div>
<div class="t " style="left:1242.60px;top:790.00px;font-size:11.1px;color:#f5f5f5;font-weight:400;">Eddie Lake</div>
<svg class="r" style="left:1501.30px;top:789.40px;" width="4" height="10" viewBox="0 0 4 10" fill="none"><g fill="#e5e5e5"><circle cx="2" cy="1.4" r="1.05"/><circle cx="2" cy="5" r="1.05"/><circle cx="2" cy="8.6" r="1.05"/></g></svg>
<div class="r" style="left:238.20px;top:874.30px;width:1322.60px;height:1.00px;background:#1f1f1f"></div>
<svg class="r" style="left:258.90px;top:843.60px;" width="6" height="10" viewBox="0 0 6 10" fill="none"><g fill="#c4c4c4"><rect x="0.050000000000000044" y="0.050000000000000044" width="1.8" height="1.8" rx="0.5"/><rect x="0.050000000000000044" y="3.75" width="1.8" height="1.8" rx="0.5"/><rect x="0.050000000000000044" y="7.45" width="1.8" height="1.8" rx="0.5"/><rect x="3.6499999999999995" y="0.050000000000000044" width="1.8" height="1.8" rx="0.5"/><rect x="3.6499999999999995" y="3.75" width="1.8" height="1.8" rx="0.5"/><rect x="3.6499999999999995" y="7.45" width="1.8" height="1.8" rx="0.5"/></g></svg>
<div class="r" style="left:336.10px;top:841.30px;width:13.10px;height:13.40px;border:1px solid #1b1b1b;border-radius:4px"></div>
<div class="t m" style="left:369.80px;top:843.00px;font-size:11.5px;color:#fafafa;font-weight:400;">Technical approach</div>
<div class="r" style="left:786.30px;top:839.40px;width:53.78px;height:17.50px;border:1px solid #262626;border-radius:6px"></div>
<div class="t m" style="left:792.00px;top:844.00px;font-size:10.3px;color:#d4d4d4;font-weight:400;">Narrative</div>
<div class="r" style="left:994.40px;top:836.10px;width:49.10px;height:24.10px;border:1px solid #262626;border-radius:6px"></div>
<div class="t " style="right:566.60px;top:843.00px;font-size:11.3px;color:#fafafa;font-weight:400;">27</div>
<div class="r" style="left:1118.20px;top:836.10px;width:49.60px;height:24.10px;border:1px solid #262626;border-radius:6px"></div>
<div class="t " style="right:442.40px;top:843.00px;font-size:11.3px;color:#fafafa;font-weight:400;">23</div>
<div class="t " style="left:1242.60px;top:843.00px;font-size:11.1px;color:#f5f5f5;font-weight:400;">Jamik Tashpulatov</div>
<svg class="r" style="left:1501.30px;top:843.00px;" width="4" height="10" viewBox="0 0 4 10" fill="none"><g fill="#e5e5e5"><circle cx="2" cy="1.4" r="1.05"/><circle cx="2" cy="5" r="1.05"/><circle cx="2" cy="8.6" r="1.05"/></g></svg>
<div class="r" style="left:238.20px;top:927.90px;width:1322.60px;height:1.00px;background:#1f1f1f"></div>
<svg class="r" style="left:258.90px;top:897.20px;" width="6" height="10" viewBox="0 0 6 10" fill="none"><g fill="#c4c4c4"><rect x="0.050000000000000044" y="0.050000000000000044" width="1.8" height="1.8" rx="0.5"/><rect x="0.050000000000000044" y="3.75" width="1.8" height="1.8" rx="0.5"/><rect x="0.050000000000000044" y="7.45" width="1.8" height="1.8" rx="0.5"/><rect x="3.6499999999999995" y="0.050000000000000044" width="1.8" height="1.8" rx="0.5"/><rect x="3.6499999999999995" y="3.75" width="1.8" height="1.8" rx="0.5"/><rect x="3.6499999999999995" y="7.45" width="1.8" height="1.8" rx="0.5"/></g></svg>
<div class="r" style="left:336.10px;top:894.90px;width:13.10px;height:13.40px;border:1px solid #1b1b1b;border-radius:4px"></div>
<div class="t m" style="left:369.80px;top:897.00px;font-size:11.5px;color:#fafafa;font-weight:400;">Design</div>
<div class="r" style="left:786.30px;top:893.00px;width:53.78px;height:17.50px;border:1px solid #262626;border-radius:6px"></div>
<div class="t m" style="left:792.00px;top:897.00px;font-size:10.3px;color:#d4d4d4;font-weight:400;">Narrative</div>
<div class="r" style="left:994.40px;top:889.70px;width:49.10px;height:24.10px;border:1px solid #262626;border-radius:6px"></div>
<div class="t " style="right:566.60px;top:897.00px;font-size:11.3px;color:#fafafa;font-weight:400;">2</div>
<div class="r" style="left:1118.20px;top:889.70px;width:49.60px;height:24.10px;border:1px solid #262626;border-radius:6px"></div>
<div class="t " style="right:442.40px;top:897.00px;font-size:11.3px;color:#fafafa;font-weight:400;">16</div>
<div class="t " style="left:1242.60px;top:897.00px;font-size:11.1px;color:#f5f5f5;font-weight:400;">Jamik Tashpulatov</div>
<svg class="r" style="left:1501.30px;top:896.60px;" width="4" height="10" viewBox="0 0 4 10" fill="none"><g fill="#e5e5e5"><circle cx="2" cy="1.4" r="1.05"/><circle cx="2" cy="5" r="1.05"/><circle cx="2" cy="8.6" r="1.05"/></g></svg>
<div class="r" style="left:238.20px;top:981.50px;width:1322.60px;height:1.00px;background:#1f1f1f"></div>
<svg class="r" style="left:258.90px;top:950.80px;" width="6" height="10" viewBox="0 0 6 10" fill="none"><g fill="#c4c4c4"><rect x="0.050000000000000044" y="0.050000000000000044" width="1.8" height="1.8" rx="0.5"/><rect x="0.050000000000000044" y="3.75" width="1.8" height="1.8" rx="0.5"/><rect x="0.050000000000000044" y="7.45" width="1.8" height="1.8" rx="0.5"/><rect x="3.6499999999999995" y="0.050000000000000044" width="1.8" height="1.8" rx="0.5"/><rect x="3.6499999999999995" y="3.75" width="1.8" height="1.8" rx="0.5"/><rect x="3.6499999999999995" y="7.45" width="1.8" height="1.8" rx="0.5"/></g></svg>
<div class="r" style="left:336.10px;top:948.50px;width:13.10px;height:13.40px;border:1px solid #1b1b1b;border-radius:4px"></div>
<div class="t m" style="left:369.80px;top:950.00px;font-size:11.5px;color:#fafafa;font-weight:400;">Capabilities</div>
<div class="r" style="left:786.30px;top:946.60px;width:53.78px;height:17.50px;border:1px solid #262626;border-radius:6px"></div>
<div class="t m" style="left:792.00px;top:951.00px;font-size:10.3px;color:#d4d4d4;font-weight:400;">Narrative</div>
<div class="r" style="left:994.40px;top:943.30px;width:49.10px;height:24.10px;border:1px solid #262626;border-radius:6px"></div>
<div class="t " style="right:566.60px;top:950.00px;font-size:11.3px;color:#fafafa;font-weight:400;">20</div>
<div class="r" style="left:1118.20px;top:943.30px;width:49.60px;height:24.10px;border:1px solid #262626;border-radius:6px"></div>
<div class="t " style="right:442.40px;top:950.00px;font-size:11.3px;color:#fafafa;font-weight:400;">8</div>
<div class="t " style="left:1242.60px;top:950.00px;font-size:11.1px;color:#f5f5f5;font-weight:400;">Jamik Tashpulatov</div>
<svg class="r" style="left:1501.30px;top:950.20px;" width="4" height="10" viewBox="0 0 4 10" fill="none"><g fill="#e5e5e5"><circle cx="2" cy="1.4" r="1.05"/><circle cx="2" cy="5" r="1.05"/><circle cx="2" cy="8.6" r="1.05"/></g></svg>
<div class="r" style="left:217.00px;top:991.00px;width:1383.00px;height:13.00px;background:#0c0c0c"></div>
<div class="r" style="left:237.00px;top:990.50px;width:1325.00px;height:1.00px;background:#1c1c1c"></div>
<div class="r" style="left:0.00px;top:991.00px;width:217.00px;height:13.00px;background:#0c0c0c"></div>
<div class="r" style="left:1551.5px;top:955px;width:41px;height:41px;border-radius:50%;background:#040404"></div>
<svg class="r" style="left:1553px;top:957px" width="38" height="38" viewBox="0 0 38 38"><defs><linearGradient id="sky" x1="0" y1="0" x2="0" y2="1"><stop offset="0" stop-color="#a8e4f0"/><stop offset="0.35" stop-color="#f6dca0"/><stop offset="0.62" stop-color="#f4a090"/><stop offset="1" stop-color="#f4a090"/></linearGradient><radialGradient id="isl" cx="0.5" cy="0.3" r="0.7"><stop offset="0" stop-color="#d8e838"/><stop offset="1" stop-color="#90c828"/></radialGradient><clipPath id="pc"><circle cx="19" cy="19" r="19"/></clipPath></defs><g clip-path="url(#pc)"><circle cx="19" cy="19" r="19" fill="url(#sky)"/><circle cx="28" cy="9" r="4.5" fill="#f2b030"/><rect x="0" y="24" width="38" height="6" fill="#3aa0b0"/><ellipse cx="19" cy="33" rx="15" ry="10" fill="url(#isl)"/><path d="M14 26 L16 14" stroke="#6a3818" stroke-width="1.6"/><path d="M16 13 C12 10 8 11 6 14 M16 13 C13 8 17 6 20 7 M16 13 C20 10 23 12 24 15 M16 13 C12 12 10 16 10 18" stroke="#2a9a20" stroke-width="3" fill="none" stroke-linecap="round"/><circle cx="19" cy="19" r="18.2" fill="none" stroke="#d8f0b0" stroke-width="1.6" opacity="0.8"/></g></svg>
</div>
</body></html>
